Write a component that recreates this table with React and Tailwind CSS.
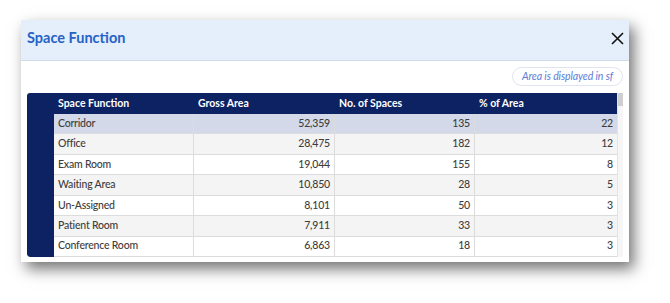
import React from "react";

const rows = [
  ["Corridor", "52,359", "135", "22"],
  ["Office", "28,475", "182", "12"],
  ["Exam Room", "19,044", "155", "8"],
  ["Waiting Area", "10,850", "28", "5"],
  ["Un-Assigned", "8,101", "50", "3"],
  ["Patient Room", "7,911", "33", "3"],
  ["Conference Room", "6,863", "18", "3"],
];

export default function App() {
  return (
    <div
      className="w-[670px] h-[303px] bg-white pt-[20px] pl-[21px]"
      style={{ fontFamily: "Lato, 'Noto Sans', sans-serif" }}
    >
      <div className="w-[608px] h-[242px] bg-white shadow-[5px_7px_14px_rgba(0,0,0,0.55)] flex flex-col">
        <div className="h-[41px] bg-[#e5eefb] border-b border-[#d3dbe7] flex items-center justify-between pl-[6px] pr-[5px] pb-[4px]">
          <span className="text-[14.5px] font-bold text-[#2563c6] leading-none">Space Function</span>
          <svg width="13" height="13" viewBox="0 0 13 13">
            <path d="M1 1 L12 12 M12 1 L1 12" stroke="#111" strokeWidth="1.6" fill="none" />
          </svg>
        </div>
        <div className="flex justify-end pr-[6px] pt-[6px]">
          <div className="h-[19px] w-[111px] rounded-full border border-[#dfe4ee] flex items-center justify-center text-[10.5px] italic text-[#5a7ed8] leading-none tracking-[-0.1px]">
            Area is displayed in sf
          </div>
        </div>
        <div className="mt-[7px] ml-[6px] w-[596px] h-[164px] flex">
          <div className="w-[590px] flex flex-col rounded-l-[3px] overflow-hidden">
            <div className="flex h-[21px] bg-[#0c2263] text-white font-bold text-[10.5px]">
              <div className="w-[27px]" />
              <div className="w-[140px] pl-[4px] flex items-center">Space Function</div>
              <div className="w-[141px] pl-[4px] flex items-center">Gross Area</div>
              <div className="w-[140px] pl-[4px] flex items-center">No. of Spaces</div>
              <div className="w-[142px] pl-[4px] flex items-center">% of Area</div>
            </div>
            <div className="flex flex-1">
              <div className="w-[27px] bg-[#0c2263] rounded-bl-[3px]" />
              <div className="flex-1 flex flex-col text-[10.5px] font-medium tracking-[-0.2px] text-[#3d3d3d]">
                {rows.map((r, i) => {
                  const bg = i === 0 ? "bg-[#d3d9e8]" : i % 2 === 1 ? "bg-[#f4f4f4]" : "bg-white";
                  return (
                    <div key={i} className={`flex h-[20.43px] ${bg} border-b border-[#dcdcdc]`}>
                      <div className="w-[140px] pl-[4px] flex items-center border-r border-[#dcdcdc]">{r[0]}</div>
                      <div className="w-[141px] pr-[4px] flex items-center justify-end border-r border-[#dcdcdc]">{r[1]}</div>
                      <div className="w-[140px] pr-[4px] flex items-center justify-end border-r border-[#dcdcdc]">{r[2]}</div>
                      <div className="w-[142px] pr-[4px] flex items-center justify-end">{r[3]}</div>
                    </div>
                  );
                })}
              </div>
            </div>
          </div>
          <div className="w-[6px] bg-[#f6f6f6] border-l border-[#e4e4e4] flex flex-col">
            <div className="h-[13px] bg-[#cfcfcf]" />
          </div>
        </div>
      </div>
    </div>
  );
}
